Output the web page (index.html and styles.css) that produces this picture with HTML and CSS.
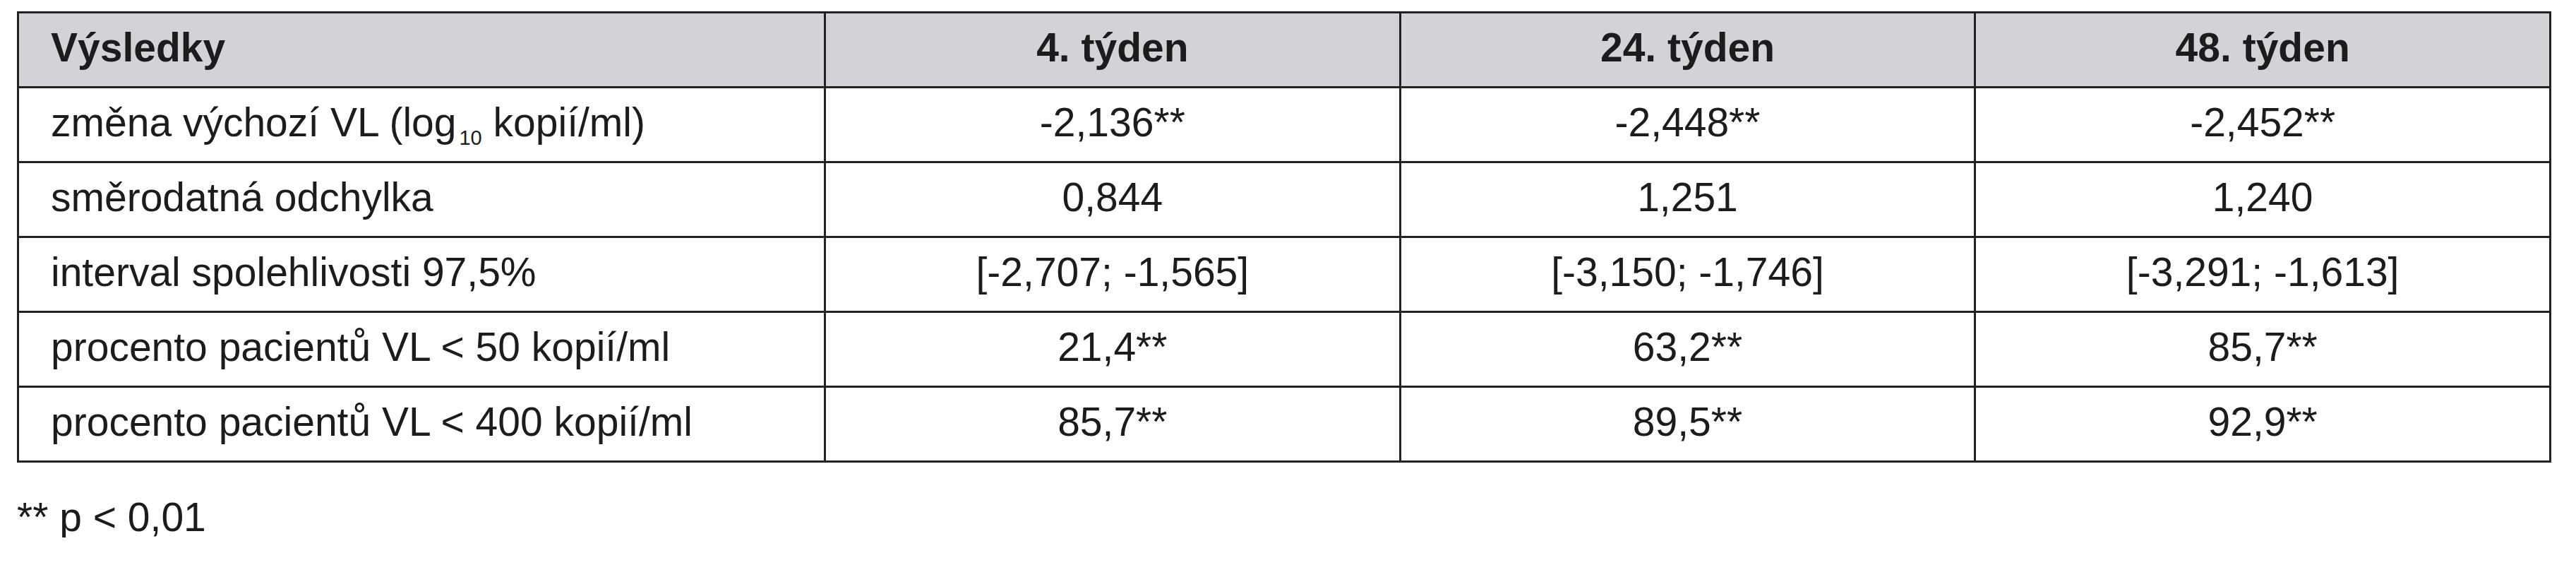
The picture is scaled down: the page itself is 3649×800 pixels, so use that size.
FILE: index.html
```html
<!DOCTYPE html>
<html lang="cs">
<head>
<meta charset="utf-8">
<title>Výsledky</title>
<link rel="stylesheet" href="styles.css">
</head>
<body>
<div class="page">
  <table class="results">
    <colgroup>
      <col class="c-label">
      <col class="c-val">
      <col class="c-val">
      <col class="c-val">
    </colgroup>
    <thead>
      <tr>
        <th class="label">Výsledky</th>
        <th>4. týden</th>
        <th>24. týden</th>
        <th>48. týden</th>
      </tr>
    </thead>
    <tbody>
      <tr>
        <td class="label">změna výchozí VL (log<sub>10</sub> kopií/ml)</td>
        <td>-2,136**</td>
        <td>-2,448**</td>
        <td>-2,452**</td>
      </tr>
      <tr>
        <td class="label">směrodatná odchylka</td>
        <td>0,844</td>
        <td>1,251</td>
        <td>1,240</td>
      </tr>
      <tr>
        <td class="label">interval spolehlivosti 97,5%</td>
        <td>[-2,707; -1,565]</td>
        <td>[-3,150; -1,746]</td>
        <td>[-3,291; -1,613]</td>
      </tr>
      <tr>
        <td class="label">procento pacientů VL &lt; 50 kopií/ml</td>
        <td>21,4**</td>
        <td>63,2**</td>
        <td>85,7**</td>
      </tr>
      <tr>
        <td class="label">procento pacientů VL &lt; 400 kopií/ml</td>
        <td>85,7**</td>
        <td>89,5**</td>
        <td>92,9**</td>
      </tr>
    </tbody>
  </table>
  <p class="note">** p &lt; 0,01</p>
</div>
</body>
</html>
```
FILE: styles.css
```css
html, body {
  margin: 0;
  padding: 0;
  background: #ffffff;
}

body {
  font-family: "Liberation Sans", Arial, sans-serif;
  color: #1c1c1c;
}

.page {
  padding: 16px 0 0 24px;
}

.results {
  border-collapse: collapse;
  width: 3590px;
  table-layout: fixed;
  font-size: 57px;
}

.c-label { width: 1143px; }

.results th,
.results td {
  border: 3px solid #222222;
  height: 97px;
  padding: 0 0 6px 0;
  text-align: center;
  vertical-align: middle;
  line-height: 1;
  white-space: nowrap;
}

.results th {
  background: #d3d3d5;
  font-weight: bold;
}

.results .label {
  text-align: left;
  padding-left: 45px;
}

.results sub {
  font-size: 29px;
  margin-left: 4px;
  vertical-align: -12px;
  line-height: 0;
}

.note {
  margin: 49px 0 0 0;
  font-size: 57px;
  line-height: 1;
}
```
